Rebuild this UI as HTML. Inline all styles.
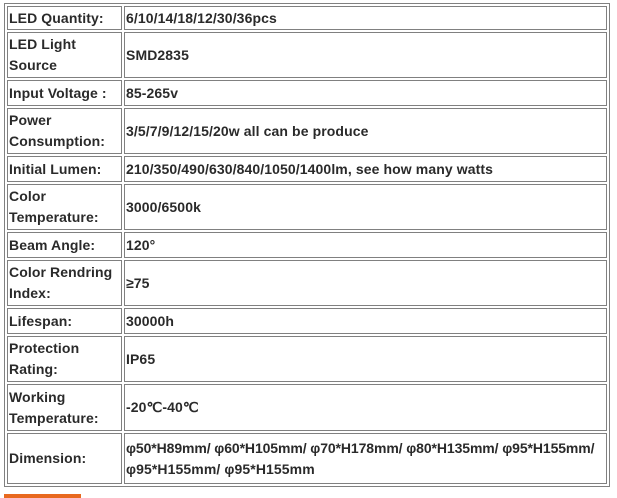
<!DOCTYPE html>
<html><head><style>
body{margin:0;background:#fff;width:617px;height:498px;overflow:hidden;position:relative}
table{position:absolute;left:4px;top:3px;width:606px;border:1px solid #808080;border-spacing:2px;font:bold 14px/21px "Liberation Sans",Arial,sans-serif;letter-spacing:0.1px;color:#2a2a2a;table-layout:fixed}
td{border:1px solid #808080;padding:0 1px;vertical-align:middle;overflow:hidden}
col.l{width:115px}
.nw{white-space:nowrap;letter-spacing:-0.1px}
.bar{position:absolute;left:4px;top:494px;width:77px;height:4px;background:#e8691f}
</style></head><body>
<table>
<colgroup><col class="l"><col></colgroup>
<tr style="height:24px"><td>LED Quantity:</td><td>6/10/14/18/12/30/36pcs</td></tr>
<tr style="height:46px"><td>LED Light<br>Source</td><td>SMD2835</td></tr>
<tr style="height:26px"><td>Input Voltage :</td><td>85-265v</td></tr>
<tr style="height:46px"><td>Power Consumption:</td><td>3/5/7/9/12/15/20w all can be produce</td></tr>
<tr style="height:26px"><td>Initial Lumen:</td><td>210/350/490/630/840/1050/1400lm, see how many watts</td></tr>
<tr style="height:46px"><td>Color Temperature:</td><td>3000/6500k</td></tr>
<tr style="height:26px"><td>Beam Angle:</td><td>120°</td></tr>
<tr style="height:46px"><td>Color Rendring Index:</td><td>≥75</td></tr>
<tr style="height:26px"><td>Lifespan:</td><td>30000h</td></tr>
<tr style="height:46px"><td>Protection Rating:</td><td>IP65</td></tr>
<tr style="height:47px"><td>Working Temperature:</td><td>-20℃-40℃</td></tr>
<tr style="height:51px"><td>Dimension:</td><td><span class="nw">φ50*H89mm/ φ60*H105mm/ φ70*H178mm/ φ80*H135mm/ φ95*H155mm/</span><br>φ95*H155mm/ φ95*H155mm</td></tr>
</table>
<div class="bar"></div>
</body></html>
